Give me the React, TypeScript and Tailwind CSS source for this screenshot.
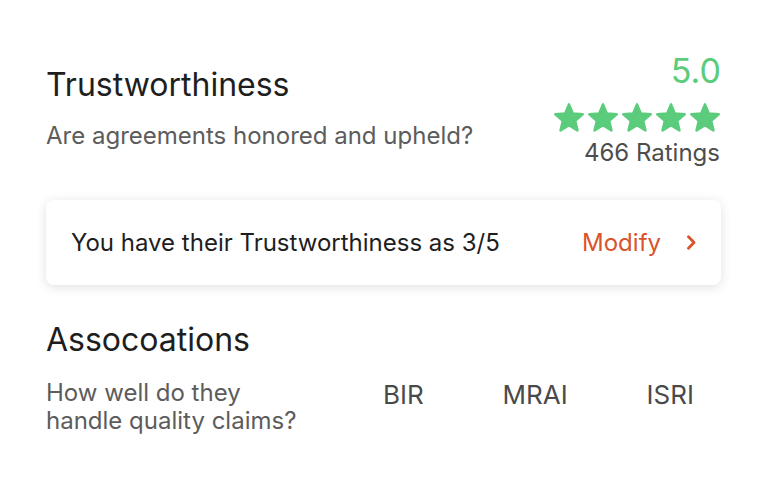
import React from 'react';

// five-point star, rounded tips via round stroke join
function Star() {
  return (
    <svg viewBox="-48 -50 96 92" className="w-[30px] h-[29px]">
      <path
        d="M0 -46 L12.17 -16.75 L43.75 -14.21 L19.69 6.4 L27.04 37.21 L0 20.7 L-27.04 37.21 L-19.69 6.4 L-43.75 -14.21 L-12.17 -16.75 Z"
        fill="#5bcb7c"
        stroke="#5bcb7c"
        strokeWidth="8"
        strokeLinejoin="round"
      />
    </svg>
  );
}

export default function App() {
  return (
    <div className="w-[764px] h-[480px] bg-white font-['Inter',sans-serif] pl-[46px] pr-[44px] pt-[51px]">
      <div className="flex justify-between items-start">
        <div className="pt-[14px]">
          <h1 className="text-[32px] leading-[40px] text-[#1e1e1e]">Trustworthiness</h1>
          <p className="text-[24px] leading-[32px] text-[#5c5c5c] mt-[15px]">Are agreements honored and upheld?</p>
        </div>
        <div className="flex flex-col items-end">
          <div className="text-[34px] leading-[40px] text-[#5bcb7c] -mr-[1px]">5.0</div>
          <div className="flex gap-[4px] mt-[12px]">
            <Star />
            <Star />
            <Star />
            <Star />
            <Star />
          </div>
          <div className="text-[24px] leading-[32px] text-[#4d4d4d] mt-[5px]">466 Ratings</div>
        </div>
      </div>

      <div className="mt-[31px] -mr-[1px] h-[85px] rounded-[8px] bg-white shadow-[0_2px_12px_rgba(0,0,0,0.12)] flex items-center justify-between pl-[25px] pr-[24px]">
        <span className="text-[24px] leading-[32px] text-[#1e1e1e]">You have their Trustworthiness as 3/5</span>
        <span className="flex items-center gap-[25px] text-[24px] leading-[32px] text-[#d9532c]">
          Modify
          <svg viewBox="0 0 11 15" className="w-[11px] h-[15px]" fill="none" stroke="#d9532c" strokeWidth="2.8" strokeLinecap="round" strokeLinejoin="round">
            <path d="M2.5 1.8l5.5 5.7-5.5 5.7" />
          </svg>
        </span>
      </div>

      <h2 className="mt-[35px] text-[32px] leading-[40px] text-[#1e1e1e]">Assocoations</h2>
      <div className="flex items-start mt-[19px]">
        <p className="w-[255px] text-[24px] leading-[28px] text-[#5c5c5c]">How well do they handle quality claims?</p>
        <div className="flex flex-1 justify-between text-[26px] leading-[32px] text-[#4a4a4a] pl-[82px] pr-[26px]">
          <span>BIR</span>
          <span>MRAI</span>
          <span>ISRI</span>
        </div>
      </div>
    </div>
  );
}
